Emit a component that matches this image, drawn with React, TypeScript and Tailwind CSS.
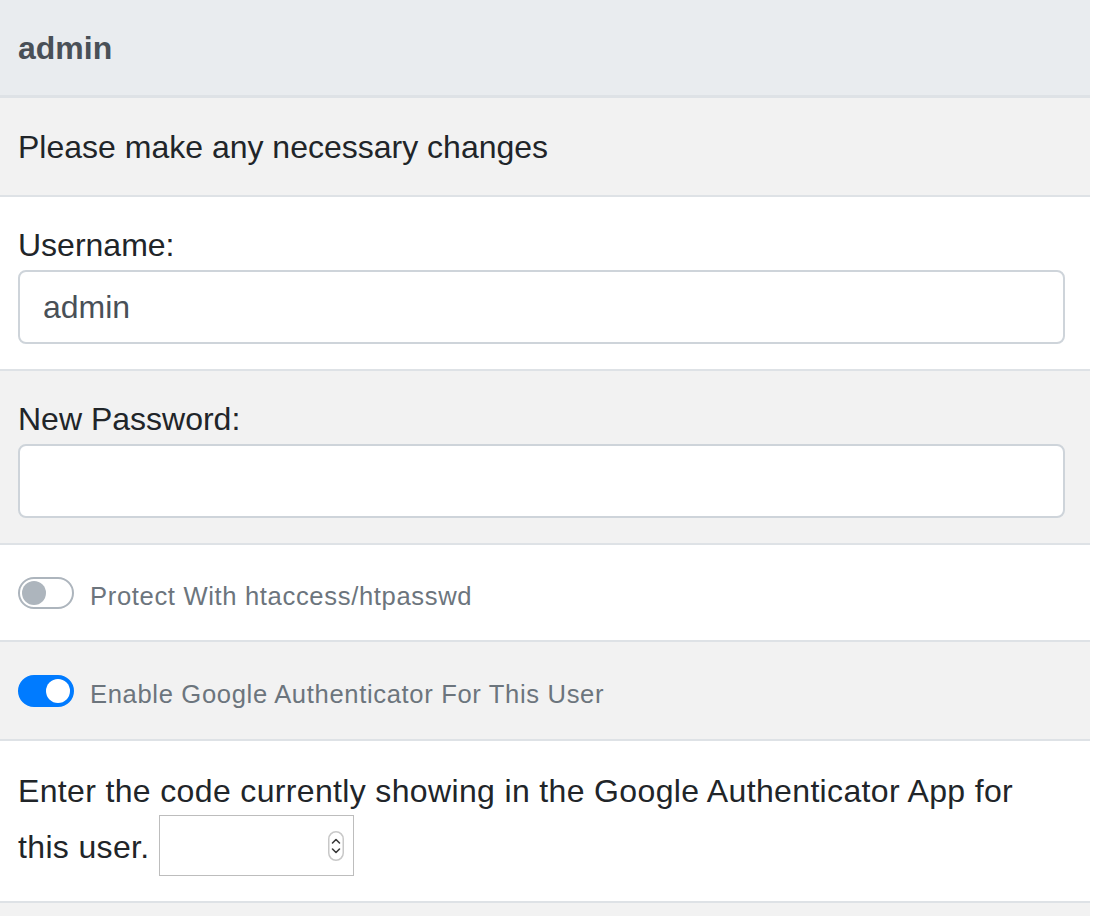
import React from 'react';

// Switch styled like the Bootstrap custom-switch
function Toggle({ on }: { on: boolean }) {
  return (
    <span
      className={`relative inline-block h-[32px] w-[56px] shrink-0 rounded-full border-2 ${
        on ? 'border-[#007bff] bg-[#007bff]' : 'border-[#adb5bd] bg-white'
      }`}
    >
      <span
        className={`absolute top-[2px] h-[24px] w-[24px] rounded-full ${
          on ? 'left-[26px] bg-white' : 'left-[2px] bg-[#adb5bd]'
        }`}
      />
    </span>
  );
}

function SwitchRow({ on, label, shaded }: { on: boolean; label: string; shaded?: boolean }) {
  return (
    <li
      className={`flex items-center gap-[16px] border-b-2 border-[#dee2e6] px-[18px] ${
        shaded ? 'h-[99px] bg-[#f2f2f2]' : 'h-[97px] bg-white'
      }`}
    >
      <Toggle on={on} />
      <span className="pt-[7px] text-[25.6px] tracking-[0.65px] text-[#6c757d]">{label}</span>
    </li>
  );
}

export default function App() {
  return (
    <div className="w-[1090px] bg-white font-['Liberation_Sans',Arial,sans-serif] text-[#212529]">
      <div className="flex h-[98px] items-center border-b-[3px] border-[#dee2e6] bg-[#e9ecef] px-[18px]">
        <h5 className="text-[32px] font-bold text-[#495057]">admin</h5>
      </div>

      <ul>
        <li className="border-b-2 border-[#dee2e6] bg-[#f2f2f2] px-[18px] pt-[25px] pb-[24px] text-[32px] leading-[48px]">
          Please make any necessary changes
        </li>

        <li className="border-b-2 border-[#dee2e6] bg-white pl-[18px] pr-[25px] pt-[24px] pb-[25px]">
          <label className="mb-px block text-[32px] leading-[48px]">Username:</label>
          <div className="flex h-[74px] items-center rounded-[8px] border-2 border-[#ced4da] bg-white px-[23px] text-[32px] text-[#495057]">
            admin
          </div>
        </li>

        <li className="border-b-2 border-[#dee2e6] bg-[#f2f2f2] pl-[18px] pr-[25px] pt-[24px] pb-[25px]">
          <label className="mb-px block text-[32px] leading-[48px]">New Password:</label>
          <div className="h-[74px] rounded-[8px] border-2 border-[#ced4da] bg-white" />
        </li>

        <SwitchRow on={false} label="Protect With htaccess/htpasswd" />
        <SwitchRow on label="Enable Google Authenticator For This User" shaded />

        <li className="border-b-2 border-[#dee2e6] bg-white pl-[18px] pr-[25px] pt-[26px] pb-[25px] text-[32px] leading-[48px] tracking-[0.35px]">
          Enter the code currently showing in the Google Authenticator App for this user.{' '}
          <span className="inline-block h-[61px] w-[195px] overflow-hidden border border-[#bdbdbd] bg-white align-[-18px]">
            <span className="flex h-full items-center justify-end pr-[9px]">
              <svg width="16" height="30" viewBox="0 0 16 30" fill="none">
                <rect x="0.75" y="0.75" width="14.5" height="28.5" rx="7.25" stroke="#c8c8c8" strokeWidth="1.5" />
                <path d="M4.5 12 L8 8.5 L11.5 12" stroke="#3a3a3a" strokeWidth="1.6" strokeLinecap="round" strokeLinejoin="round" />
                <path d="M4.5 18 L8 21.5 L11.5 18" stroke="#3a3a3a" strokeWidth="1.6" strokeLinecap="round" strokeLinejoin="round" />
              </svg>
            </span>
          </span>
        </li>

        <li className="h-[60px] bg-[#f2f2f2]" />
      </ul>
    </div>
  );
}
